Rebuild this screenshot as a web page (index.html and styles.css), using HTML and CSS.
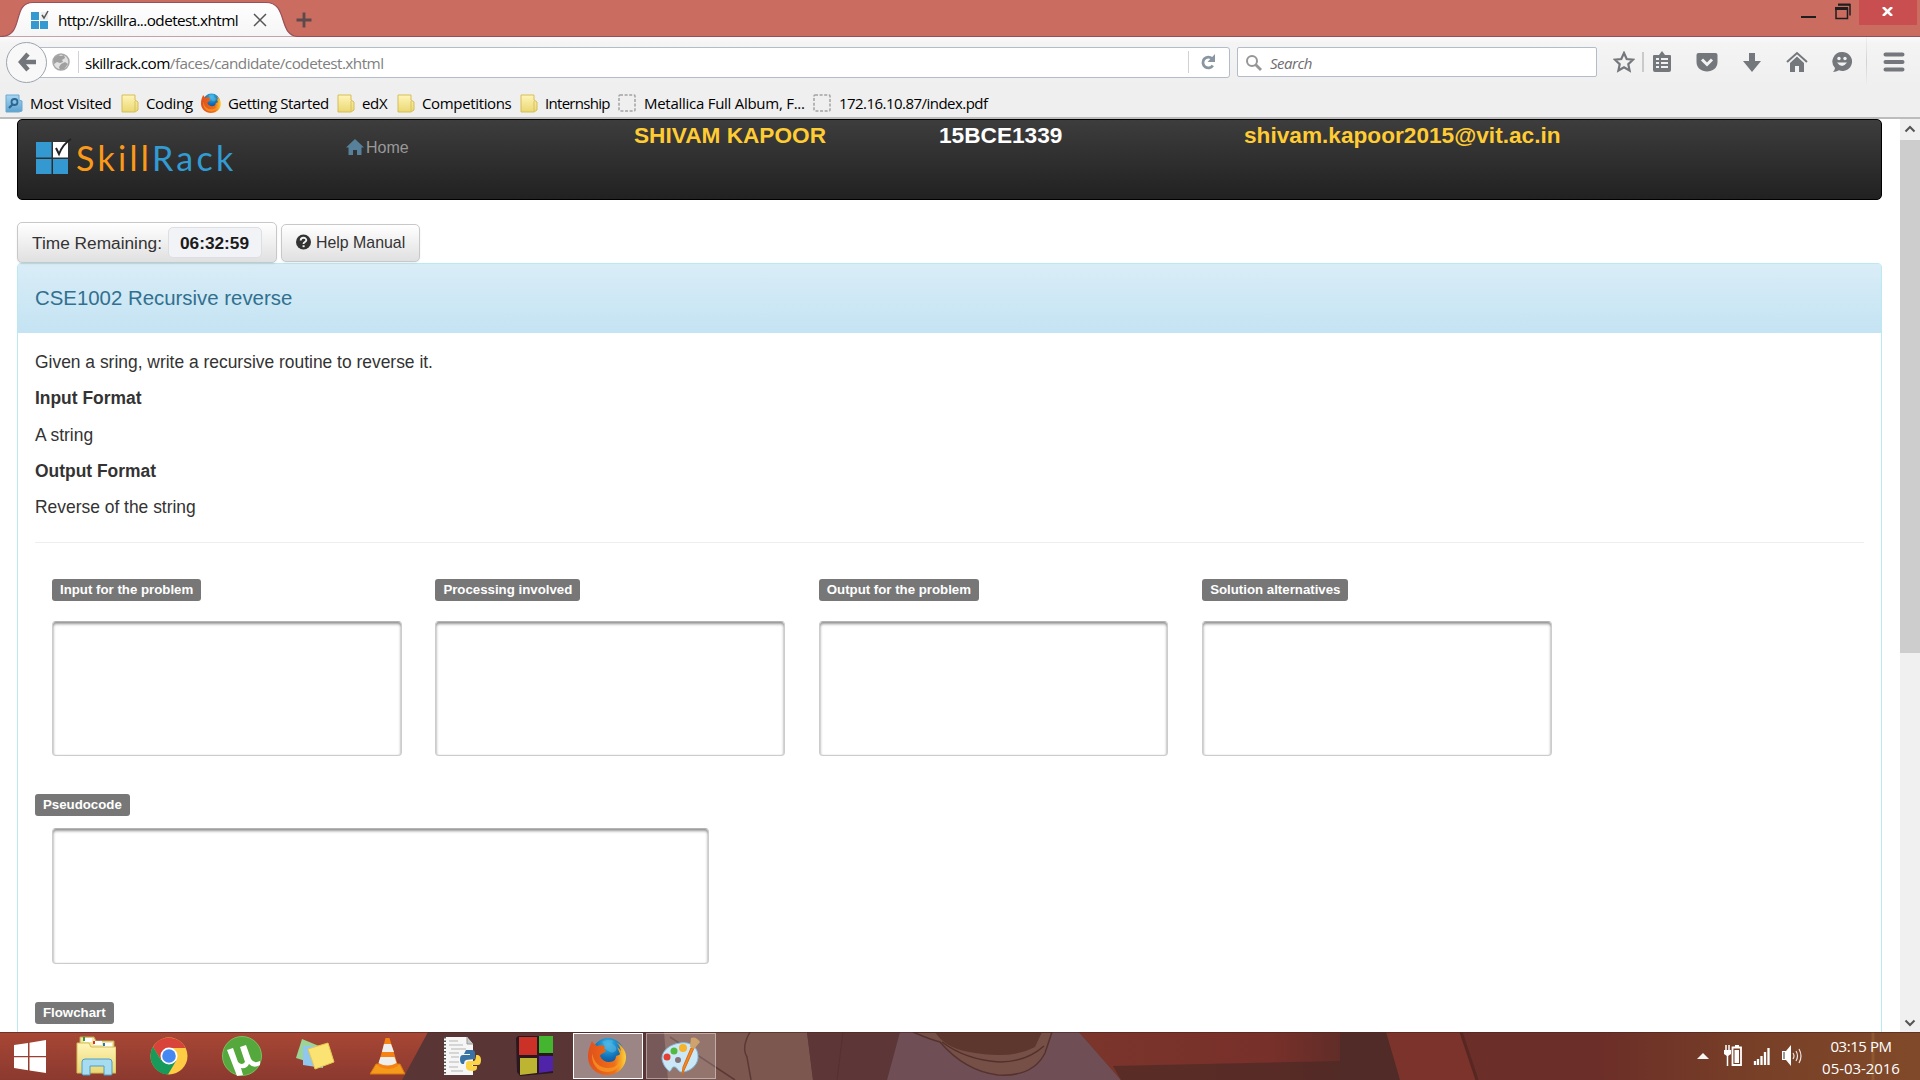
FILE: index.html
```html
<!DOCTYPE html>
<html lang="en">
<head>
<meta charset="utf-8">
<title>SkillRack</title>
<link rel="stylesheet" href="styles.css">
</head>
<body>
<svg width="0" height="0" class="defs">
  <defs>
    <linearGradient id="gFolder" x1="0" y1="0" x2="0" y2="1"><stop offset="0" stop-color="#fff5b8"/><stop offset="1" stop-color="#ead773"/></linearGradient>
    <linearGradient id="gBlue" x1="0" y1="0" x2="0" y2="1"><stop offset="0" stop-color="#a9d6f2"/><stop offset="1" stop-color="#5da3cf"/></linearGradient>
    <radialGradient id="gGlobe" cx=".5" cy=".2" r=".8"><stop offset="0" stop-color="#35bdf0"/><stop offset=".5" stop-color="#1272b8"/><stop offset="1" stop-color="#15316e"/></radialGradient>
    <linearGradient id="gFox" x1="0" y1="0" x2="1" y2="0"><stop offset="0" stop-color="#e0501c"/><stop offset=".7" stop-color="#ee7018"/><stop offset="1" stop-color="#fbd53a"/></linearGradient>
    <symbol id="folder" viewBox="0 0 18 19"><path d="M1 1h13v5l3 2v8l-3 2H1z" fill="url(#gFolder)" stroke="#d5bd58" stroke-width="1"/><path d="M14 7v11" stroke="#d9c260"/></symbol>
    <symbol id="blank" viewBox="0 0 18 18"><rect x="1" y="1" width="16" height="16" rx="1" fill="none" stroke="#a2a2a2" stroke-width="1.5" stroke-dasharray="3 1.6"/></symbol>
    <symbol id="firefox" viewBox="0 0 38 38">
      <circle cx="20" cy="17" r="16" fill="url(#gGlobe)"/>
      <path d="M14 5c4-3 9-2 12-1-3 1-2 3 0 4s4 5 0 7-6-2-9-3 1-4-3-7z" fill="#5cb6de" opacity=".55"/>
      <path d="M4 4c1 2 3 4 5 5 3-1 5-1 8 0-1 2-1 3 1 5-1 2-5 2-6 5 2 4 5 6 9 6 5 0 7-3 7-6 2-1 4-1 4-2-1-3-2-5-3-7 3 2 4 4 4 6 0-4-2-9-5-11 6 3 10 9 10 15C38 30 30 38 19 38S0 30 0 20C0 13 2 9 4 4z" fill="url(#gFox)"/>
      <path d="M4 16c2 10 8 15 16 15s12-5 13-10c1 8-6 14-14 14C9 35 3 26 4 16z" fill="#f9a126" opacity=".65"/>
    </symbol>
  </defs>
</svg>

<header class="titlebar">
  <svg class="tab-shape" width="300" height="37" viewBox="0 0 300 37"><defs><linearGradient id="gTab" x1="0" y1="0" x2="0" y2="1"><stop offset="0" stop-color="#fff"/><stop offset="1" stop-color="#f5f5f5"/></linearGradient></defs><path d="M0 36.500C24 36.500 10 2.500 32 2.500H265C288 2.500 276 36.500 298 36.500" fill="url(#gTab)" stroke="#9a5059" stroke-width="1.200"/></svg>
  <div class="tab">
    <svg class="favicon" width="20" height="20" viewBox="0 0 20 20"><path d="M1 2h8v8H1zM1 11h8v8H1zM10 11h8v8h-8z" fill="#3399cf"/><path d="M11 2h7v8h-8z" fill="#eee"/><path d="M12 5l2 3 4-7" fill="none" stroke="#555" stroke-width="1.500"/></svg>
    <span class="tab-title">http://skillra...odetest.xhtml</span>
    <svg width="14" height="14" viewBox="0 0 14 14"><path d="M1 1l12 12M13 1L1 13" stroke="#555" stroke-width="1.500"/></svg>
  </div>
  <svg class="plus" width="16" height="16" viewBox="0 0 16 16"><path d="M8 .5v15M.5 8h15" stroke="#5c4a4b" stroke-width="2.800"/></svg>
  <div class="window-buttons">
    <svg width="16" height="20" viewBox="0 0 16 20"><path d="M0 17h15" stroke="#1e1e1e" stroke-width="2"/></svg>
    <svg width="16" height="20" viewBox="0 0 16 20"><path d="M3 4.500h12v11" stroke="#1e1e1e" stroke-width="1.500" fill="none"/><path d="M3 4.700h12" stroke="#1e1e1e" stroke-width="2"/><path d="M1 8.500h11.500v10H1z" fill="none" stroke="#1e1e1e" stroke-width="1.500"/><path d="M0 8.500h13" stroke="#1e1e1e" stroke-width="3"/></svg>
    <div class="close"><svg width="11" height="9" viewBox="0 0 11 9"><path d="M1 0l9 9M10 0L1 9" stroke="#fff" stroke-width="2.600"/></svg></div>
  </div>
</header>

<nav class="toolbar">
  <div class="back"><svg width="18" height="20" viewBox="0 0 18 20"><path d="M10 2L3 10l7 8M3 10h15" fill="none" stroke="#727579" stroke-width="4.500"/></svg></div>
  <div class="url">
    <svg width="18" height="18" viewBox="0 0 18 18"><circle cx="9" cy="9" r="8" fill="#e2e2e2" stroke="#a8a8a8" stroke-width="1.500"/><path d="M2 5l4-3 3 1 3-1 1 3-3 2 1 2-3 1-3-1-3 2zM9 11l4-2 3 2-4 5-4 1-1-3z" fill="#a0a0a0"/></svg>
    <i class="sep"></i>
    <span class="address"><b>skillrack.com</b>/faces/candidate/codetest.xhtml</span>
    <i class="sep"></i>
    <svg class="reload" width="16" height="16" viewBox="0 0 16 16"><path d="M12 4.500A5.400 5.400 0 1 0 12.800 11.500" fill="none" stroke="#8996a1" stroke-width="2.800"/><path d="M15 0v8H7.500z" fill="#8996a1"/></svg>
  </div>
  <div class="search"><svg width="18" height="18" viewBox="0 0 18 18"><circle cx="7" cy="7" r="5" fill="none" stroke="#969696" stroke-width="2"/><path d="M10.500 10.500L16 16" stroke="#969696" stroke-width="2.800"/></svg><span>Search</span></div>
  <div class="tools">
    <svg width="22" height="22" viewBox="0 0 22 22"><path d="M11 2l2.700 6 6.300.7-4.700 4.400 1.300 6.400L11 16.300l-5.600 3.200 1.300-6.400L2 8.700 8.300 8z" fill="none" stroke="#74777b" stroke-width="2.200"/></svg>
    <i class="divider"></i>
    <svg width="22" height="22" viewBox="0 0 22 22"><path d="M3 4h5l3-4 3 4h5q1 0 1 1v14q0 2-2 2H4q-2 0-2-2V5q0-1 1-1z" fill="#74777b"/><path d="M5 8h3M10 8h7M5 12h3M10 12h7M5 16h3M10 16h7" stroke="#f1f1f1" stroke-width="2"/></svg>
    <svg width="22" height="22" viewBox="0 0 22 22"><path d="M2.500 2h17q2 0 2 2v7c0 6-5 9.500-10.500 9.500S.5 17 .5 11V4q0-2 2-2z" fill="#74777b"/><path d="M6 8.500l5 5 5-5" fill="none" stroke="#f3f3f3" stroke-width="3"/></svg>
    <svg width="22" height="22" viewBox="0 0 22 22"><path d="M8 2h6v8h6l-9 11-9-11h6z" fill="#74777b"/></svg>
    <svg width="22" height="22" viewBox="0 0 22 22"><path d="M1 11L11 2l10 9" fill="none" stroke="#74777b" stroke-width="2"/><path d="M4 12l7-6.500L18 12v9h-5v-6H9v6H4z" fill="#74777b"/></svg>
    <svg width="22" height="22" viewBox="0 0 22 22"><path d="M11 1a9.500 9.500 0 1 1-3 18.300Q5 21 2 21q2-2 2-4A9.500 9.500 0 0 1 11 1z" fill="#74777b"/><path d="M6 11.500q5 7 10 0z" fill="#f1f1f1"/><circle cx="8" cy="7.500" r="1.700" fill="#f1f1f1"/><circle cx="14" cy="7.500" r="1.700" fill="#f1f1f1"/></svg>
    <i class="divider tall"></i>
    <svg width="22" height="22" viewBox="0 0 22 22"><path d="M2.500 3.500h17M2.500 11h17M2.500 18.500h17" stroke="#74777b" stroke-width="4" stroke-linecap="round"/></svg>
  </div>
</nav>

<div class="bookmarks">
  <a class="bm w1"><svg width="18" height="19" viewBox="0 0 18 19"><path d="M1 1h13v5l3 1v10l-3 1H1z" fill="url(#gBlue)" stroke="#6da8cf"/><circle cx="9.500" cy="8" r="3" fill="none" stroke="#2c6692" stroke-width="1.800"/><path d="M7.500 10.500L4 14" stroke="#2c6692" stroke-width="2.200"/></svg><span>Most Visited</span></a>
  <a class="bm w2"><svg width="18" height="19"><use href="#folder"/></svg><span>Coding</span></a>
  <a class="bm w3"><svg width="20" height="20"><use href="#firefox"/></svg><span>Getting Started</span></a>
  <a class="bm w4"><svg width="18" height="19"><use href="#folder"/></svg><span>edX</span></a>
  <a class="bm w5"><svg width="18" height="19"><use href="#folder"/></svg><span>Competitions</span></a>
  <a class="bm w6"><svg width="18" height="19"><use href="#folder"/></svg><span>Internship</span></a>
  <a class="bm w7"><svg width="18" height="18"><use href="#blank"/></svg><span>Metallica Full Album, F...</span></a>
  <a class="bm w8"><svg width="18" height="18"><use href="#blank"/></svg><span>172.16.10.87/index.pdf</span></a>
</div>

<div class="viewport">
  <main class="page">
    <div class="navbar">
      <div class="brand">
        <svg width="36" height="38" viewBox="0 0 36 38"><path d="M0 5h15.500v15.500H0zM0 22h15.500v15H0zM17 22h15v15H17z" fill="#3499d0"/><path d="M17 5h15v15.500H17z" fill="#fff"/><path d="M20 11l3 6Q27 7 35 2" fill="none" stroke="#222" stroke-width="2"/></svg>
        <span class="logo"><em>Skill</em>Rack</span>
      </div>
      <a class="home"><svg width="18" height="16" viewBox="0 0 18 16"><path d="M9 0l9 8.500h-2.500V16H11v-5H7v5H2.500V8.500H0z" fill="#57809a"/></svg><span>Home</span></a>
      <span class="who name">SHIVAM KAPOOR</span>
      <span class="who roll">15BCE1339</span>
      <span class="who">shivam.kapoor2015@vit.ac.in</span>
    </div>

    <div class="actions">
      <div class="btn timer"><span>Time Remaining:</span><b>06:32:59</b></div>
      <div class="btn help"><svg width="15" height="16" viewBox="0 0 16 16"><circle cx="8" cy="8" r="8" fill="#333"/><path d="M5 6.300C5 2.500 11 2.500 11 6.200 11 8 8 8 8 10" fill="none" stroke="#f3f3f3" stroke-width="2"/><path d="M7 11.500h2.200v2H7z" fill="#f3f3f3"/></svg>Help Manual</div>
    </div>

    <section class="panel">
      <h1>CSE1002 Recursive reverse</h1>
      <div class="body">
        <p>Given a sring, write a recursive routine to reverse it.</p>
        <p><b>Input Format</b></p>
        <p>A string</p>
        <p><b>Output Format</b></p>
        <p>Reverse of the string</p>
        <hr>
        <div class="fields">
          <div class="field"><span class="label">Input for the problem</span><div class="area"></div></div>
          <div class="field"><span class="label">Processing involved</span><div class="area"></div></div>
          <div class="field"><span class="label">Output for the problem</span><div class="area"></div></div>
          <div class="field"><span class="label">Solution alternatives</span><div class="area"></div></div>
        </div>
        <div class="block"><span class="label">Pseudocode</span><div class="area wide"></div></div>
        <div class="block"><span class="label">Flowchart</span></div>
      </div>
    </section>
  </main>
  <div class="scrollbar">
    <svg width="12" height="8" viewBox="0 0 12 8"><path d="M1.500 6.500L6 2l4.500 4.500" fill="none" stroke="#555" stroke-width="2"/></svg>
    <div class="track"><div class="thumb"></div></div>
    <svg width="12" height="8" viewBox="0 0 12 8"><path d="M1.500 1.500L6 6l4.500-4.500" fill="none" stroke="#555" stroke-width="2"/></svg>
  </div>
</div>

<footer class="taskbar">
  <svg class="wallpaper" width="1920" height="48" viewBox="0 0 1920 48">
    <defs>
      <linearGradient id="w1" x1="0" y1="0" x2="0" y2="1"><stop offset="0" stop-color="#a84735"/><stop offset="1" stop-color="#8b392f"/></linearGradient>
      <linearGradient id="w2" x1="0" y1="0" x2="1" y2="0"><stop offset="0" stop-color="#6b2e29"/><stop offset=".3" stop-color="#6c2e28"/><stop offset=".65" stop-color="#784027"/><stop offset="1" stop-color="#804a2a"/></linearGradient>
      <linearGradient id="w3" x1="0" y1="0" x2="1" y2="0"><stop offset="0" stop-color="#7b352b"/><stop offset=".6" stop-color="#78302a"/><stop offset="1" stop-color="#4e2a26"/></linearGradient>
    </defs>
    <path d="M0 0h1920v48H0z" fill="#593535"/>
    <path d="M0 0h428L402 48H0z" fill="url(#w1)"/>
    <path d="M664 0h143l6 48H668z" fill="#7c574f"/>
    <path d="M750 0q-9 16-3 25l4 23M670 5l65 43" fill="none" stroke="#5b3836" stroke-width="1.500"/>
    <path d="M807 0h93l-13 48h-74z" fill="#5d3737"/><path d="M843 0l-6 48" stroke="#553131"/>
    <path d="M900 0h179l42 48H887z" fill="#704e56"/>
    <path d="M913 0q16 7 27 10 25 29 58 33 35 2 47-22l7-21z" fill="#765047" stroke="#54332f" stroke-width="1.500"/>
    <path d="M935 0q10 16 34 20 42 8 66-5l7-15z" fill="#5d362d"/>
    <path d="M942 10q24 18 58 20 26 0 44-16" fill="none" stroke="#53302c" stroke-width="1.500"/>
    <path d="M1079 0h320v48h-278z" fill="url(#w3)"/>
    <path d="M1113 34l277-6v20h-269z" fill="#4c2925" opacity=".7"/>
    <path d="M1340 0h46l14 48h-60z" fill="#502b27"/>
    <path d="M1386 0h74l17 48h-77z" fill="#7b332c"/>
    <path d="M1460 0h460v48h-443z" fill="url(#w2)"/>
    <path d="M1461 0l16 48" stroke="#592722" stroke-width="3"/>
    <path d="M1873 0v48" stroke="#9a6534" stroke-width="3" opacity=".6"/>
    <path d="M0 .5h1920" stroke="#4c2520" opacity=".6"/>
  </svg>
  <div class="task start"><svg width="32" height="33" viewBox="0 0 32 33"><path d="M0 5l14-2v13H0zM15.500 2.700L32 0v16H15.500zM0 17.300h14v13L0 28zM15.500 17.300H32V33l-16.500-2.500z" fill="#fff"/></svg></div>
  <div class="task"><svg width="40" height="40" viewBox="0 0 40 40"><path d="M4 1h14l2 4h18v10H4z" fill="#f3e7a4" stroke="#bfa64f"/><path d="M8 2h8v4H8zM18 5h8v4h-8zM28 7h8v4h-8z" fill="#fff"/><path d="M8 1v4" stroke="#2a9a3c" stroke-width="2"/><path d="M18 5v3" stroke="#d33" stroke-width="2"/><path d="M28 7v3" stroke="#27c" stroke-width="2"/><path d="M1 7h12l2 4h25v26H1z" fill="url(#gFolder)" stroke="#d5bd58"/><path d="M6 38V26q0-3 3-3h24q3 0 3 3v12q0 1-1 1h-7v-9H14v9H7z" fill="#a6dbf0" stroke="#4f9fc6"/></svg></div>
  <div class="task"><svg width="38" height="38" viewBox="0 0 38 38"><circle cx="19" cy="19" r="18.500" fill="#fc4"/><path d="M3 10A18.500 18.500 0 0 1 35.500 11H19L11 23z" fill="#d9443a"/><path d="M3 9.700A18.500 18.500 0 0 0 18 37.500L26 24 11 23z" fill="#189a5a"/><circle cx="19" cy="19" r="8.500" fill="#fff"/><circle cx="19" cy="19" r="6.800" fill="#4688f1"/></svg></div>
  <div class="task"><svg width="40" height="40" viewBox="0 0 40 40"><circle cx="20" cy="20" r="19.500" fill="#55a83c" stroke="#7dbd62"/><path d="M5 14l6-2 5 14q4 4 7 0l-5-15 6-2 5 14q3 5 9 2v4q-6 4-11-1-2 5-8 4l2 7-6 1z" fill="#fff"/></svg></div>
  <div class="task"><svg width="40" height="36" viewBox="0 0 40 36"><path d="M7 1l17 7-7 17L1 20z" fill="#9bd596"/><path d="M8 8h20v22L8 27z" fill="#91c7ef"/><path d="M13 11l20-6 6 19-19 7z" fill="#fae373" stroke="#e8c84f"/></svg></div>
  <div class="task"><svg width="36" height="38" viewBox="0 0 36 38"><path d="M6 27h24l5 10H0z" fill="#f59a1b" stroke="#d9750d"/><path d="M15.500 1h4L28 29q-10 6-20 0z" fill="#f58212"/><path d="M14 7h7l3 8H12zM10.500 20h14l2 6q-9 5-18 0z" fill="#eee"/></svg></div>
  <div class="task python"><svg width="38" height="40" viewBox="0 0 38 40"><path d="M1 1h23l6 7v31H1z" fill="#f6f6f6"/><path d="M2 1v38" stroke="#555" stroke-width="2" stroke-dasharray="1.500 2"/><path d="M6 5h9M6 9h14M8 13h15M6 17h10M8 21h8M6 26h10M6 31h9M8 35h12" stroke="#b5b5b5"/><path d="M24 1v7h6" fill="#ccc" stroke="#999"/><path d="M23 14h6q3 0 3 3v6l-9 1q-2 1-2 4h-2q-2-1-2-5t3-4h7v-1h-6z" fill="#3973a5"/><path d="M33 19h2q3 1 3 5 0 5-3 5h-6v1h5v2q0 3-5 3t-6-3v-4q0-3 3-3h5q2-1 2-6z" fill="#fbd446"/></svg></div>
  <div class="task"><svg width="38" height="40" viewBox="0 0 38 40"><path d="M0 2l2-2h35v37L4 40l-3-4z" fill="#2a1820"/><path d="M3 1h18v18H3z" fill="#cc3128"/><path d="M23 0h14v17H23z" fill="#43b52e"/><path d="M4 22h17v15L4 39z" fill="#bdb531"/><path d="M23 20h14v15l-14 2z" fill="#4f24a8"/></svg></div>
  <div class="task open active"><svg width="38" height="38"><use href="#firefox"/></svg></div>
  <div class="task open paint"><svg width="40" height="40" viewBox="0 0 40 40"><path d="M20 7C31 5 39 12 38 22c-1 9-10 14-16 14-5 0-4-6-9-5-2 2-2 5-4 4-3-2-7-8-7-13C2 14 11 8 20 7z" fill="#cbe8f7" stroke="#84b7d4"/><circle cx="18" cy="24" r="3" fill="#86727a"/><circle cx="7" cy="21" r="3.500" fill="#e33f32"/><circle cx="14" cy="15" r="3.500" fill="#54b944"/><circle cx="23" cy="12" r="4" fill="#f7b32c"/><path d="M34 12L22 39l1-8 8-19z" fill="#f28a22" stroke="#db6b15"/><path d="M31 2q5-2 9 4l-6 7-4-2z" fill="#cfa36e"/></svg></div>
  <div class="tray">
    <svg width="12" height="8" viewBox="0 0 12 8"><path d="M0 7l6-6 6 6z" fill="#f5f5f5"/></svg>
    <svg class="battery" width="20" height="22" viewBox="0 0 20 22"><path d="M3 0v5M6 0v5M4.500 8v13" stroke="#fff" stroke-width="1.500"/><path d="M1 5h7v4l-3 2H4L1 9z" fill="#fff"/><path d="M9.500 2.500h8.500v17.500H9.500zM12 1h4" fill="none" stroke="#fff" stroke-width="1.800"/><path d="M11.500 5h4.500v13h-4.500z" fill="#fff"/></svg>
    <svg class="signal" width="17" height="20" viewBox="0 0 17 20"><path d="M2 15v4M5 13v6M8.500 10v9M12 6v13M15.500 2v17" stroke="#fff" stroke-width="2.300"/></svg>
    <svg class="speaker" width="20" height="22" viewBox="0 0 20 22"><path d="M0 6h4l5-6v21l-5-6H0z" fill="#fff"/><path d="M1 7h2v7H1z" fill="#999"/><path d="M11 8q2 3 0 6M14 6q3 5 0 10M17 4q4 7 0 14" fill="none" stroke="#fff" stroke-width="1.200" opacity=".85"/></svg>
    <div class="clock"><span>03:15 PM</span><span class="date">05-03-2016</span></div>
  </div>
</footer>
</body>
</html>
```
FILE: styles.css
```css
* { box-sizing: border-box; }
body { margin: 0; width: 1920px; height: 1080px; overflow: hidden; display: flex; flex-direction: column; background: #fff; color: #333; font-family: "Liberation Sans", Arial, sans-serif; }
svg { display: block; flex: none; }
.defs { position: absolute; }

/* browser chrome */
.titlebar { position: relative; height: 37px; flex: none; display: flex; align-items: center; background: #cb6c60; border-bottom: 1px solid #94505a; font-family: "Open Sans", "Noto Sans", sans-serif; }
.tab-shape { position: absolute; left: 1px; top: 0; }
.tab { position: relative; width: 268px; display: flex; align-items: center; padding: 4px 0 0 30px; color: #000; font-size: 15.3px; }
.tab-title { width: 195px; margin-left: 8px; white-space: nowrap; letter-spacing: -.58px; }
.plus { margin: 3px 0 0 28px; }
.window-buttons { margin-left: auto; align-self: flex-start; display: flex; padding-right: 3px; }
.window-buttons > svg { margin-right: 18px; }
.window-buttons > svg + svg { margin-right: 8px; }
.close { width: 58px; height: 25px; display: flex; justify-content: center; align-items: center; background: #c84e50; padding: 0 2px 2px 0; }

.toolbar { height: 50px; flex: none; display: flex; align-items: center; background: linear-gradient(#fbfbfb, #f4f4f4 12%, #efefef); font-family: "Open Sans", "Noto Sans", sans-serif; font-size: 15.3px; }
.back { position: relative; z-index: 1; width: 41px; height: 41px; margin-left: 6px; border: 1px solid #9ba4ad; border-radius: 50%; background: #f8f8f8; display: flex; align-items: center; justify-content: center; }
.url { width: 1192px; height: 31px; margin-left: -9px; padding: 0 13px; display: flex; align-items: center; background: #fff; border: 1px solid #b3bcc8; border-radius: 0 3px 3px 0; }
.sep { width: 1px; height: 22px; margin: 0 6px 0 8px; background: #cfd2d6; }
.address { flex: 1; padding-top: 2px; color: #808080; letter-spacing: -.53px; }
.address b { color: #000; font-weight: 400; }
.reload { margin-left: 5px; }
.search { width: 360px; height: 30px; margin-left: 7px; display: flex; align-items: center; gap: 7px; padding: 1px 0 0 7px; background: #fff; border: 1px solid #b3bcc8; border-radius: 2px; color: #6d6d6d; font-style: italic; font-size: 15px; letter-spacing: -.5px; }
.tools { flex: 1; height: 50px; display: flex; align-items: center; gap: 23px; padding-left: 15.5px; }
.divider { width: 2px; height: 20px; margin: 0 -16px 0 -15.500px; background: #cacaca; }
.tall { width: 1px; height: 50px; margin: 0 -12px 0 -10px; background: linear-gradient(#f0f0f0, #d2d2d2, #f0f0f0); }
.tools svg:last-child { margin-left: 5px; }

.bookmarks { height: 32px; flex: none; display: flex; align-items: center; padding: 2px 0 0 5px; background: #efefef; border-bottom: 2px solid #bcbcbc; color: #000; font-family: "Open Sans", "Noto Sans", sans-serif; font-size: 15px; }
.bm { display: flex; align-items: center; gap: 7px; white-space: nowrap; letter-spacing: -.35px; }
.w1 { width: 116px; }
.w2 { width: 80px; }
.w3 { width: 136px; }
.w4 { width: 60px; }
.w5 { width: 123px; }
.w6 { width: 98px; letter-spacing: -.7px; }
.w7 { width: 195px; gap: 8px; letter-spacing: -.27px; }
.w8 { width: 180px; gap: 8px; letter-spacing: -.54px; }

/* web page */
.viewport { flex: 1; min-height: 0; display: flex; overflow: hidden; }
.page { flex: 1; padding: 0 18px 0 17px; overflow: hidden; }
.navbar { height: 81px; display: flex; align-items: flex-start; border: 1px solid #000; border-radius: 5px; background: linear-gradient(#3d3d3d, #212121); }
.brand { width: 328px; display: flex; align-items: flex-start; padding: 17px 0 0 18px; gap: 4px; }
.logo { font: 400 34px/41px Lato, sans-serif; color: #329bd2; letter-spacing: 3.3px; }
.logo em { font-style: normal; color: #fb9a19; }
.home { width: 288px; display: flex; align-items: center; gap: 2px; padding-top: 17px; color: #999; font-size: 16px; line-height: 20px; }
.home svg { margin-bottom: 2px; }
.home span { padding-top: 1px; }
.who { color: #fc3; font-size: 22.65px; font-weight: 700; line-height: 26px; padding-top: 2px; }
.name { width: 305px; }
.roll { width: 305px; color: #fff; }

.actions { height: 63px; display: flex; align-items: center; gap: 4px; padding-top: 22px; }
.btn { display: flex; align-items: center; border: 1px solid #c8c8c8; border-radius: 5px; background: linear-gradient(#fff, #e0e0e0); white-space: nowrap; box-shadow: 0 1px 2px rgba(0,0,0,.08); }
.timer { width: 260px; height: 41px; padding: 0 14px; font-size: 17.3px; justify-content: space-between; }
.timer span { padding-top: 1px; }
.timer b { width: 94px; height: 31px; padding: 1px 1px 0 0; display: flex; align-items: center; justify-content: center; color: #1b1b1b; border: 1px solid #dcdfe3; border-radius: 5px; background: #f2f3f6; }
.help { width: 139px; height: 38px; gap: 5px; padding-left: 14px; font-size: 15.9px; }
.help svg { margin-bottom: 2px; }

.panel { height: 1000px; border: 1px solid #bce8f1; border-radius: 4px; }
.panel h1 { margin: 0; height: 69px; padding: 0 17px 1px; display: flex; align-items: center; font-size: 20.4px; font-weight: 400; color: #31708f; background: linear-gradient(#d9edf7, #c4e3f3); }
.body { padding: 19px 17px 0; font-size: 17.43px; }
.body p { margin: 0 0 12.3px; height: 24px; line-height: 21px; }
.body hr { margin: 21px 0 36px; border: 0; border-top: 1px solid #eee; }
.fields { display: flex; gap: 33.700px; padding-left: 17px; }
.field { width: 349.700px; display: flex; flex-direction: column; align-items: flex-start; gap: 20px; }
.label { height: 22px; padding: 0 8px 1px; display: inline-flex; align-items: center; background: #777; border-radius: 3px; color: #fff; font-size: 13.25px; font-weight: 700; line-height: 20px; }
.area { width: 100%; height: 135px; border: 1px solid #ccc; border-top-color: #b4b4b4; border-radius: 4px; box-shadow: inset 0 2px 3px rgba(0,0,0,.42), inset 0 0 2px rgba(0,0,0,.1); }
.block { display: flex; flex-direction: column; align-items: flex-start; gap: 12px; margin-top: 38px; }
.wide { width: 657px; height: 136px; margin-left: 17px; }

.scrollbar { width: 20px; flex: none; display: flex; flex-direction: column; align-items: center; padding: 6px 0 5px; background: #f0f0f0; }
.track { flex: 1; align-self: stretch; padding-top: 7px; }
.thumb { height: 513px; background: #cdcdcd; }

/* taskbar */
.taskbar { position: relative; height: 48px; flex: none; display: flex; align-items: center; }
.wallpaper { position: absolute; left: 0; top: 0; }
.task { position: relative; width: 70px; height: 46px; margin-right: 3.100px; display: flex; align-items: center; justify-content: center; }
.start { width: 60px; margin-right: 1px; }
.python { padding-left: 2px; }
.open { border: 1px solid rgba(255,255,255,.4); background: rgba(255,255,255,.18); }
.active { border: 1px solid #fff; background: rgba(255,255,255,.4); }
.open svg { margin-right: 2px; }
.tray { position: relative; margin-left: auto; display: flex; align-items: center; padding-right: 20px; }
.battery { margin-left: 14px; }
.signal { margin-left: 10px; }
.speaker { margin-left: 12px; }
.clock { width: 78px; margin-left: 20px; padding-top: 2px; display: flex; flex-direction: column; align-items: center; color: #fff; font: 15px/22px "Open Sans", "Noto Sans", sans-serif; letter-spacing: -.45px; white-space: nowrap; }
.date { letter-spacing: -.05px; }
```
